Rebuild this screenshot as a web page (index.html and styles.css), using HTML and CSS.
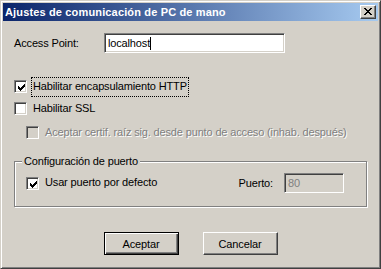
FILE: index.html
```html
<!DOCTYPE html>
<html>
 <head>
  <meta charset="UTF-8">
  <title>Ajustes de comunicación de PC de mano</title>
  <link rel="stylesheet" href="styles.css">
 </head>
 <body>
  <div class="window">
   <div class="titlebar">
    <span class="title">Ajustes de comunicación de PC de mano</span>
    <div class="close">
     <svg width="8" height="7" viewBox="0 0 8 7" shape-rendering="crispEdges">
      <path d="M0 0h2v1H0zM6 0h2v1H6zM1 1h2v1H1zM5 1h2v1H5zM2 2h4v1H2zM3 3h2v1H3zM2 4h4v1H2zM1 5h2v1H1zM5 5h2v1H5zM0 6h2v1H0zM6 6h2v1H6z" fill="#000"/>
     </svg>
    </div>
   </div>
   <div class="content">
    <div class="row access">
     <span class="lbl">Access Point:</span>
     <div class="field wide">localhost<span class="caret"></span></div>
    </div>

    <div class="check first">
     <span class="box"><svg class="tick" width="7" height="7" viewBox="0 0 7 7" shape-rendering="crispEdges"><path d="M0 2h1v3H0zM1 3h1v3H1zM2 4h1v3H2zM3 3h1v3H3zM4 2h1v3H4zM5 1h1v3H5zM6 0h1v3H6z" fill="#000"/></svg></span>
     <span class="text focus">Habilitar encapsulamiento HTTP</span>
    </div>
    <div class="check second">
     <span class="box"></span>
     <span class="text">Habilitar SSL</span>
    </div>
    <div class="check third off">
     <span class="box"></span>
     <span class="text">Aceptar certif. raíz sig. desde punto de acceso (inhab. después)</span>
    </div>

    <div class="group">
     <span class="legend">Configuración de puerto</span>
     <div class="row port">
      <div class="check">
       <span class="box"><svg class="tick" width="7" height="7" viewBox="0 0 7 7" shape-rendering="crispEdges"><path d="M0 2h1v3H0zM1 3h1v3H1zM2 4h1v3H2zM3 3h1v3H3zM4 2h1v3H4zM5 1h1v3H5zM6 0h1v3H6z" fill="#000"/></svg></span>
       <span class="text">Usar puerto por defecto</span>
      </div>
      <span class="plbl">Puerto:</span>
      <div class="field small off">80</div>
     </div>
    </div>

    <div class="buttons">
     <div class="btn default">Aceptar</div>
     <div class="btn">Cancelar</div>
    </div>
   </div>
  </div>
 </body>
</html>
```

FILE: styles.css
```css
body {
 margin: 0;
 background: #d4d0c8;
 font-family: "Liberation Sans", Arial, sans-serif;
 font-size: 11px;
 color: #000;
}

.window {
 box-sizing: border-box;
 width: 381px;
 height: 269px;
 padding: 2px;
 background: #d4d0c8;
 border: 1px solid;
 border-color: #d4d0c8 #404040 #404040 #d4d0c8;
 box-shadow: inset 1px 1px #fff, inset -1px -1px #808080;
}

/* title bar */
.titlebar {
 height: 18px;
 display: flex;
 align-items: center;
 padding: 0 2px;
 background: linear-gradient(to right, #0a246a, #a6caf0);
}
.title {
 flex: 1;
 color: #fff;
 font-weight: bold;
 font-size: 11px;
 line-height: 18px;
 letter-spacing: 0.15px;
}
.close {
 box-sizing: border-box;
 width: 16px;
 height: 14px;
 display: flex;
 align-items: center;
 justify-content: center;
 padding: 0 1px 1px 0;
 background: #d4d0c8;
 border: 1px solid;
 border-color: #fff #404040 #404040 #fff;
 box-shadow: inset -1px -1px #808080;
}

.content {
 padding: 0 0 0 11px;
 letter-spacing: -0.15px;
}

.row {
 display: flex;
 align-items: center;
}
.access {
 margin-top: 12px;
 height: 20px;
}
.lbl {
 width: 90px;
}

/* sunken edit box */
.field {
 box-sizing: border-box;
 height: 20px;
 display: flex;
 align-items: center;
 padding: 0 3px;
 background: #fff;
 border: 1px solid;
 border-color: #808080 #fff #fff #808080;
 box-shadow: inset 1px 1px #404040, inset -1px -1px #d4d0c8;
}
.wide {
 width: 181px;
}
.small {
 width: 60px;
}
.field.off {
 background: #d4d0c8;
 color: #808080;
}
.caret {
 display: inline-block;
 width: 1px;
 height: 13px;
 background: #000;
}

/* checkboxes */
.check {
 display: flex;
 align-items: center;
 height: 13px;
}
.check.first {
 margin-top: 27px;
}
.check.second {
 margin-top: 9px;
}
.check.third {
 margin-top: 11px;
 margin-left: 12px;
}
.box {
 box-sizing: border-box;
 width: 13px;
 height: 13px;
 flex: none;
 padding: 2px 0 0 2px;
 background: #fff;
 border: 1px solid;
 border-color: #808080 #fff #fff #808080;
 box-shadow: inset 1px 1px #404040, inset -1px -1px #d4d0c8;
}
.tick {
 display: block;
 margin: 1px 0 0 1px;
}
.text {
 margin-left: 4px;
 padding: 2px 1px 3px;
 line-height: 13px;
 border: 1px solid transparent;
}
.text.focus {
 border: 1px dotted #000;
}
.off .box {
 background: #d4d0c8;
}
.off .text {
 color: #808080;
 text-shadow: 1px 1px #fff;
}

/* group box */
.group {
 position: relative;
 box-sizing: border-box;
 width: 353px;
 height: 46px;
 margin-top: 22px;
 padding: 11px 22px 0 11px;
 border: 1px solid #808080;
 box-shadow: inset 1px 1px #fff, 1px 1px #fff;
}
.legend {
 position: absolute;
 top: -7px;
 left: 7px;
 padding: 0 2px;
 line-height: 13px;
 background: #d4d0c8;
}
.port {
 height: 20px;
}
.plbl {
 margin-left: auto;
 margin-right: 11px;
}

/* buttons */
.buttons {
 display: flex;
 justify-content: center;
 gap: 24px;
 margin: 25px 11px 0 0;
}
.btn {
 box-sizing: border-box;
 width: 75px;
 height: 23px;
 display: flex;
 align-items: center;
 justify-content: center;
 background: #d4d0c8;
 border: 1px solid;
 border-color: #fff #404040 #404040 #fff;
 box-shadow: inset -1px -1px #808080;
}
.btn.default {
 border: 1px solid #000;
 box-shadow: inset 1px 1px #fff, inset -1px -1px #404040, inset -2px -2px #808080;
}
```
